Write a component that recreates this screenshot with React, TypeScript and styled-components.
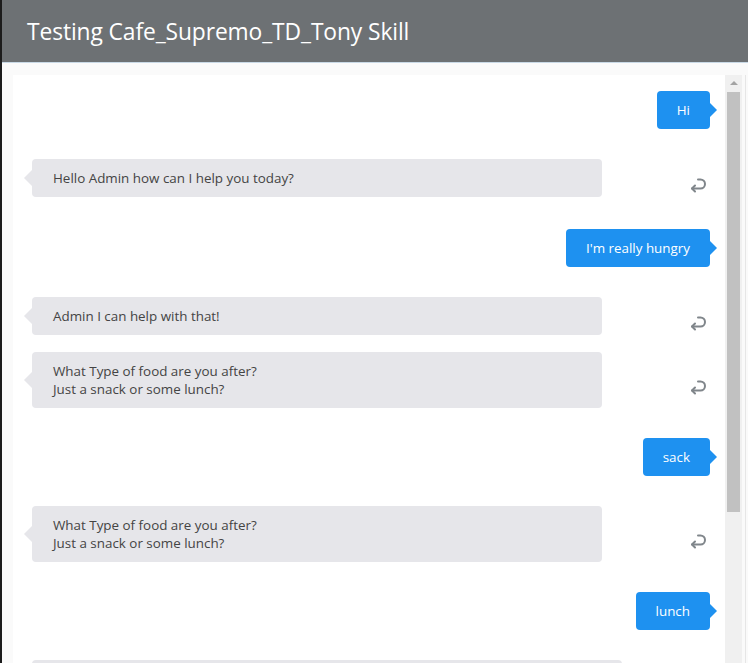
import React from "react";
import styled, { createGlobalStyle } from "styled-components";

const Global = createGlobalStyle`
  html, body { margin: 0; padding: 0; background: #ffffff; }
  body { font-family: "Open Sans", "Noto Sans", sans-serif; overflow: hidden; }
  * { box-sizing: border-box; }
`;

const Frame = styled.div`
  display: flex;
  width: 748px;
  height: 663px;
  overflow: hidden;
`;

const EdgeStrip = styled.div`
  width: 2px;
  flex: none;
  background: #1c1c1c;
`;

const Panel = styled.div`
  flex: 1;
  display: flex;
  flex-direction: column;
  min-width: 0;
`;

const Header = styled.header`
  height: 63px;
  flex: none;
  background: #6d7174;
  border-bottom: 1px solid #c9d9e6;
  display: flex;
  align-items: center;
  padding: 0 0 0 25px;
`;

const Title = styled.h1`
  margin: 0;
  font-family: "Open Sans", "Noto Sans", sans-serif;
  font-weight: 400;
  font-size: 22.8px;
  letter-spacing: -0.1px;
  color: #ffffff;
`;

const Body = styled.div`
  flex: 1;
  display: flex;
  background: #fafafa;
  padding: 12px 0 0 11px;
  min-height: 0;
`;

const ChatArea = styled.div`
  flex: 1;
  background: #ffffff;
  padding-top: 16px;
  display: flex;
  flex-direction: column;
  overflow: hidden;
`;

const Row = styled.div<{ $gap: number; $bot?: boolean }>`
  display: flex;
  align-items: center;
  justify-content: ${(p) => (p.$bot ? "space-between" : "flex-end")};
  margin-top: ${(p) => p.$gap}px;
  padding: ${(p) => (p.$bot ? "0 18px 0 19px" : "0 15px 0 0")};
  flex: none;
`;

const UserBubble = styled.div`
  position: relative;
  background: #1e91f0;
  color: #ffffff;
  font-size: 13.4px;
  line-height: 18px;
  padding: 10px 20px;
  border-radius: 4px;
  &::after {
    content: "";
    position: absolute;
    right: -7px;
    top: 50%;
    margin-top: -7px;
    border-style: solid;
    border-width: 7px 0 7px 7px;
    border-color: transparent transparent transparent #1e91f0;
  }
`;

const BotBubble = styled.div<{ $width?: number }>`
  position: relative;
  width: ${(p) => p.$width ?? 570}px;
  min-height: 38px;
  background: #e6e6ea;
  color: #444444;
  font-size: 13.4px;
  line-height: 18px;
  padding: 10px 21px;
  border-radius: 4px;
  white-space: pre-line;
  &::before {
    content: "";
    position: absolute;
    left: -8px;
    top: 50%;
    margin-top: -8px;
    border-style: solid;
    border-width: 8px 8px 8px 0;
    border-color: transparent #e6e6ea transparent transparent;
  }
`;

const ReplyIcon = styled.svg`
  width: 17px;
  height: 17px;
  flex: none;
  transform: translateY(7px);
  color: #80868b;
`;

const ScrollTrack = styled.div`
  width: 17px;
  flex: none;
  background: #f0f0f0;
  display: flex;
  flex-direction: column;
  align-items: center;
  padding-top: 5px;
`;

const ScrollArrow = styled.div`
  width: 0;
  height: 0;
  border-style: solid;
  border-width: 0 4px 4px 4px;
  border-color: transparent transparent #a3a3a3 transparent;
  margin-top: 1px;
`;

const ScrollThumb = styled.div`
  width: 13px;
  height: 420px;
  margin-top: 7px;
  background: #c1c1c1;
`;

const RightEdge = styled.div`
  width: 6px;
  flex: none;
  background: #fafafa;
  border-left: 3px solid #fafafa;
  box-shadow: inset 1px 0 0 #e6e6e6;
`;

const Reply = () => (
  <ReplyIcon viewBox="0 0 17 17" fill="none" stroke="currentColor" strokeWidth={2} strokeLinecap="round" strokeLinejoin="round">
    <path d="M8 2.5h2.5a4.5 4.5 0 0 1 0 9H2" />
    <path d="M5 8.5l-3 3 3 3" />
  </ReplyIcon>
);

type Msg = { from: "user" | "bot"; text: string; gap: number; width?: number; noIcon?: boolean };

const messages: Msg[] = [
  { from: "user", text: "Hi", gap: 0 },
  { from: "bot", text: "Hello Admin how can I help you today?", gap: 30 },
  { from: "user", text: "I'm really hungry", gap: 32 },
  { from: "bot", text: "Admin I can help with that!", gap: 30 },
  { from: "bot", text: "What Type of food are you after?\nJust a snack or some lunch?", gap: 17 },
  { from: "user", text: "sack", gap: 30 },
  { from: "bot", text: "What Type of food are you after?\nJust a snack or some lunch?", gap: 30 },
  { from: "user", text: "lunch", gap: 30 },
  { from: "bot", text: "", gap: 30, width: 590, noIcon: true },
];

export default function App() {
  return (
    <>
      <Global />
      <Frame>
        <EdgeStrip />
        <Panel>
          <Header>
            <Title>Testing Cafe_Supremo_TD_Tony Skill</Title>
          </Header>
          <Body>
            <ChatArea>
              {messages.map((m, i) =>
                m.from === "user" ? (
                  <Row key={i} $gap={m.gap}>
                    <UserBubble>{m.text}</UserBubble>
                  </Row>
                ) : (
                  <Row key={i} $bot $gap={m.gap}>
                    <BotBubble $width={m.width}>{m.text}</BotBubble>
                    {!m.noIcon && <Reply />}
                  </Row>
                )
              )}
            </ChatArea>
            <ScrollTrack>
              <ScrollArrow />
              <ScrollThumb />
            </ScrollTrack>
            <RightEdge />
          </Body>
        </Panel>
      </Frame>
    </>
  );
}
